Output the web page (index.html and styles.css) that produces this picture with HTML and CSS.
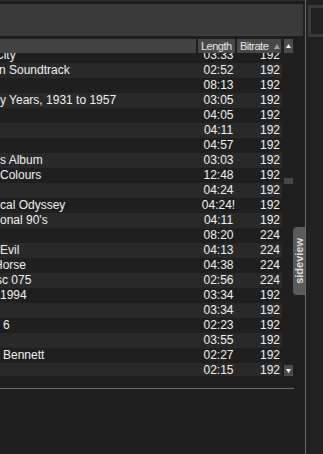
FILE: index.html
```html
<!DOCTYPE html>
<html lang="en">
<head>
    <meta charset="UTF-8">
    <meta name="viewport" content="width=device-width, initial-scale=1.0">
    <title>Playlist</title>
    <link rel="stylesheet" href="styles.css">
</head>
<body>
    <div class="app">
        <div class="main">
            <div class="topbar"></div>
            <div class="toolbar"></div>
            <div class="header">
                <div class="h-title"></div>
                <div class="h-cell h-length">Length</div>
                <div class="h-cell h-bitrate">Bitrate
                    <svg class="sort" width="6" height="5" viewBox="0 0 6 5"><polygon points="3,0 6,5 0,5" fill="#9c9c9c"/></svg>
                </div>
                <div class="scroll-btn">
                    <svg width="5" height="4" viewBox="0 0 5 4"><polygon points="2.5,0 5,4 0,4" fill="#fff"/></svg>
                </div>
            </div>
            <div class="list">
                <div class="rows">
                    <div class="row"><span class="title"><span class="cut-5">City</span></span><span class="len">03:33</span><span class="rate">192</span></div>
                    <div class="row"><span class="title"><span class="cut-1">n Soundtrack</span></span><span class="len">02:52</span><span class="rate">192</span></div>
                    <div class="row"><span class="title"></span><span class="len">08:13</span><span class="rate">192</span></div>
                    <div class="row"><span class="title">y Years, 1931 to 1957</span><span class="len">03:05</span><span class="rate">192</span></div>
                    <div class="row"><span class="title"></span><span class="len">04:05</span><span class="rate">192</span></div>
                    <div class="row"><span class="title"></span><span class="len">04:11</span><span class="rate">192</span></div>
                    <div class="row"><span class="title"></span><span class="len">04:57</span><span class="rate">192</span></div>
                    <div class="row"><span class="title">s Album</span><span class="len">03:03</span><span class="rate">192</span></div>
                    <div class="row"><span class="title">Colours</span><span class="len">12:48</span><span class="rate">192</span></div>
                    <div class="row"><span class="title"></span><span class="len">04:24</span><span class="rate">192</span></div>
                    <div class="row"><span class="title">cal Odyssey</span><span class="len">04:24!</span><span class="rate">192</span></div>
                    <div class="row"><span class="title">onal 90's</span><span class="len">04:11</span><span class="rate">192</span></div>
                    <div class="row"><span class="title"></span><span class="len">08:20</span><span class="rate">224</span></div>
                    <div class="row"><span class="title">Evil</span><span class="len">04:13</span><span class="rate">224</span></div>
                    <div class="row"><span class="title"><span class="cut-6">Horse</span></span><span class="len">04:38</span><span class="rate">224</span></div>
                    <div class="row"><span class="title"><span class="cut-4">sc 075</span></span><span class="len">02:56</span><span class="rate">224</span></div>
                    <div class="row"><span class="title">1994</span><span class="len">03:34</span><span class="rate">192</span></div>
                    <div class="row"><span class="title"></span><span class="len">03:34</span><span class="rate">192</span></div>
                    <div class="row"><span class="title indent">6</span><span class="len">02:23</span><span class="rate">192</span></div>
                    <div class="row"><span class="title"></span><span class="len">03:55</span><span class="rate">192</span></div>
                    <div class="row"><span class="title indent">Bennett</span><span class="len">02:27</span><span class="rate">192</span></div>
                    <div class="row"><span class="title"></span><span class="len">02:15</span><span class="rate">192</span></div>
                </div>
                <div class="scrollbar">
                    <div class="track"><div class="thumb"></div></div>
                    <div class="scroll-btn down">
                        <svg width="5" height="4" viewBox="0 0 5 4"><polygon points="0,0 5,0 2.5,4" fill="#fff"/></svg>
                    </div>
                </div>
            </div>
            <div class="divider"></div>
            <div class="tab"><span>sideview</span></div>
        </div>
        <div class="side">
            <div class="side-box"></div>
        </div>
    </div>
</body>
</html>
```

FILE: styles.css
```css
body, html {
    margin: 0;
    padding: 0;
    height: 100%;
    overflow: hidden;
    background: #1f1f1f;
    font-family: "Liberation Sans", Arial, sans-serif;
}

.app {
    display: flex;
    width: 323px;
    height: 454px;
}

.main {
    position: relative;
    width: 305px;
    border-right: 1px solid #6a6a6a;
    flex-shrink: 0;
}

.topbar {
    height: 3px;
    border-top: 1px solid #2e2e2e;
    background: #1c1c1c;
}

.toolbar {
    width: 303px;
    height: 32px;
    background: #3a3a3a;
    margin-bottom: 3px;
}

/* column headers */
.header {
    display: flex;
    height: 14px;
    gap: 2px;
    font-size: 11px;
    line-height: 14px;
    color: #e8e8e8;
    letter-spacing: -0.5px;
}

.h-title {
    width: 196px;
    background: #434343;
}

.h-cell {
    background: #484848;
    padding-left: 3px;
    box-sizing: border-box;
    white-space: nowrap;
}

.h-length {
    width: 37px;
}

.h-bitrate {
    width: 44px;
}

.sort {
    margin-left: 3px;
    vertical-align: 1px;
}

.scroll-btn {
    width: 9px;
    height: 14px;
    margin-left: 1px;
    background: #4c4c4c;
    display: flex;
    align-items: center;
    justify-content: center;
}

.scroll-btn svg {
    display: block;
}

/* track list */
.list {
    display: flex;
    gap: 2px;
    height: 323px;
    overflow: hidden;
}

.rows {
    width: 282px;
    margin-top: -5px;
    align-self: flex-start;
}

.row {
    display: flex;
    height: 15px;
    line-height: 15px;
    font-size: 12px;
    color: #f0f0f0;
    background: #1f1f1f;
    white-space: nowrap;
}

.row:nth-child(even) {
    background: #292929;
}

.title {
    width: 198px;
    overflow: hidden;
}

.title.indent {
    padding-left: 3px;
    box-sizing: border-box;
}

.cut-1 { margin-left: -1px; }
.cut-4 { margin-left: -4px; }
.cut-5 { margin-left: -5px; }
.cut-6 { margin-left: -6px; }

.len {
    width: 41px;
    text-align: center;
}

.rate {
    width: 43px;
    padding-right: 2px;
    box-sizing: border-box;
    text-align: right;
}

.scrollbar {
    width: 9px;
    display: flex;
    flex-direction: column;
}

.track {
    flex: 1;
}

.thumb {
    margin-top: 125px;
    height: 6px;
    background: #474747;
}

.scroll-btn.down {
    height: 11px;
    margin-left: 0;
}

.divider {
    margin-top: 12px;
    width: 294px;
    height: 1px;
    background: #6c6c6c;
}

/* side tab sitting over the gutter */
.tab {
    position: absolute;
    left: 293px;
    top: 227px;
    width: 12px;
    height: 68px;
    background: #5a5a5a;
    border-radius: 4px 0 0 4px;
    display: flex;
    align-items: center;
    justify-content: center;
}

.tab span {
    writing-mode: vertical-rl;
    transform: rotate(180deg);
    font-size: 11px;
    font-weight: bold;
    color: #dedede;
    line-height: 12px;
}

.side {
    flex: 1;
    background: #212121;
    padding-top: 5px;
}

.side-box {
    margin-left: 2px;
    height: 32px;
    box-sizing: border-box;
    border: 3px solid #3a3a3a;
    border-right: none;
    background: #222;
}
```
